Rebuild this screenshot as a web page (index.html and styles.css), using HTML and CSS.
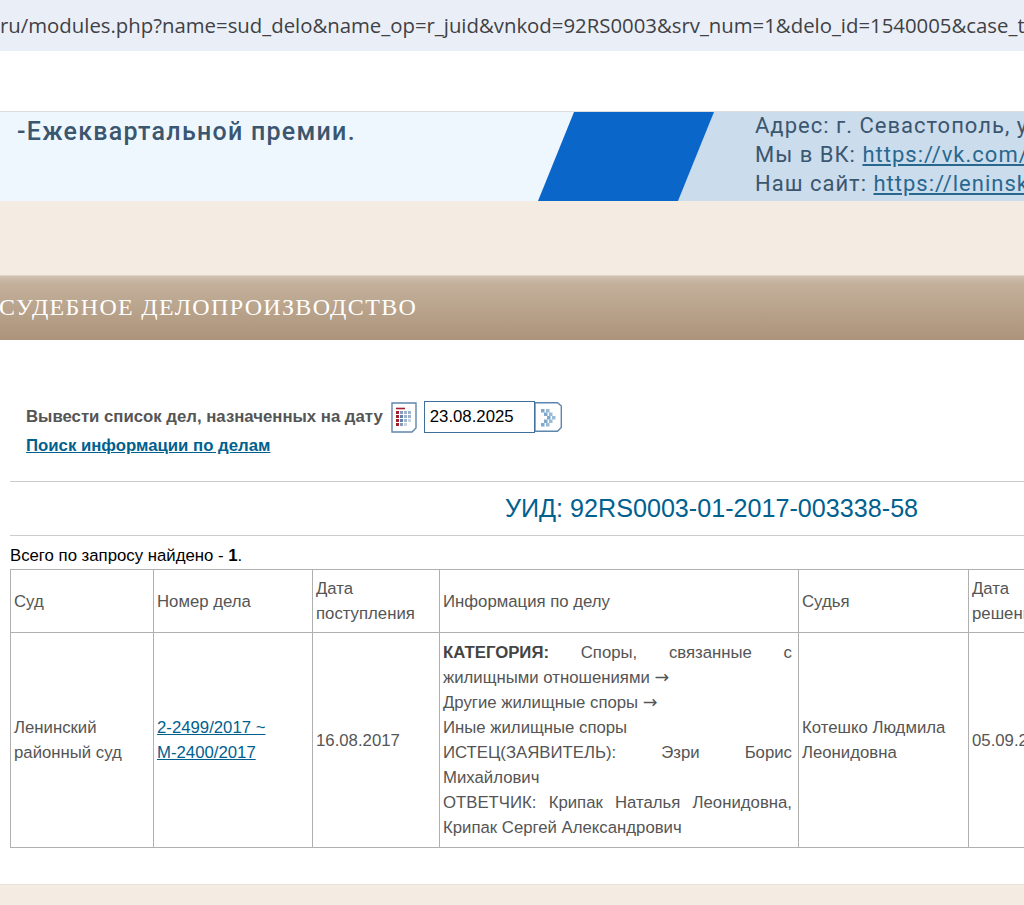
FILE: index.html
```html
<!DOCTYPE html>
<html lang="ru">
<head>
<meta charset="utf-8">
<title>Судебное делопроизводство</title>
<link rel="stylesheet" href="styles.css">
</head>
<body>
<div class="urlbar">ru/modules.php?name=sud_delo&amp;name_op=r_juid&amp;vnkod=92RS0003&amp;srv_num=1&amp;delo_id=1540005&amp;case_type=0</div>
<div class="topgap"></div>
<div class="banner">
  <svg class="banner-art" width="1024" height="89" viewBox="0 0 1024 89" aria-hidden="true">
    <polygon points="714,0 1024,0 1024,89 678,89" fill="#cbdcec"/>
    <polygon points="574,0 714,0 678,89 538,89" fill="#0a66c9"/>
  </svg>
  <div class="banner-left">-Ежеквартальной премии.</div>
  <div class="banner-right">
    <div>Адрес: г. Севастополь, ул. Ленина</div>
    <div>Мы в ВК: <a href="#">https://vk.com/leninsky</a></div>
    <div>Наш сайт: <a href="#">https://leninsky.sev.sudrf.ru</a></div>
  </div>
</div>
<div class="beige"></div>
<div class="titlebar"><span class="title">СУДЕБНОЕ ДЕЛОПРОИЗВОДСТВО</span></div>
<main class="content">
  <div class="datebar">
    <b class="datelabel">Вывести список дел, назначенных на дату</b>
    <svg class="calicon" width="26" height="31" viewBox="0 0 26 31" aria-hidden="true">
      <path d="M1 1H25V26L21 30H1Z" fill="#fff" stroke="#5f86ad" stroke-width="1.4"/>
      <path d="M5 6.5H14" stroke="#a31f2d" stroke-width="1.6"/>
      <rect x="5" y="9" width="3" height="3" fill="#a31f2d"/><rect x="9" y="9" width="3" height="3" fill="#8a9bb5"/><rect x="13" y="9" width="3" height="3" fill="#9db3cc"/><rect x="17" y="9" width="3" height="3" fill="#9db3cc"/>
      <rect x="5" y="13" width="3" height="3" fill="#a31f2d"/><rect x="9" y="13" width="3" height="3" fill="#5f7fa8"/><rect x="13" y="13" width="3" height="3" fill="#9db3cc"/><rect x="17" y="13" width="3" height="3" fill="#9db3cc"/>
      <rect x="5" y="17" width="3" height="3" fill="#a31f2d"/><rect x="9" y="17" width="3" height="3" fill="#5f7fa8"/><rect x="13" y="17" width="3" height="3" fill="#9db3cc"/><rect x="17" y="17" width="3" height="3" fill="#c5d3e2"/>
      <rect x="5" y="21" width="3" height="3" fill="#a31f2d"/><rect x="9" y="21" width="3" height="3" fill="#8a9bb5"/><rect x="13" y="21" width="3" height="3" fill="#c5d3e2"/>
    </svg>
    <div class="dategroup">
      <input class="dateinput" type="text" value="23.08.2025">
      <svg class="gobtn" width="27" height="30" viewBox="0 0 27 30" aria-hidden="true">
        <path d="M0 .7H22.500L26.300 4V25.500L22.500 29.300H0Z" fill="#fff" stroke="#5f86ad" stroke-width="1.4"/>
        <g fill="#7fa9cc">
          <rect x="6" y="7" width="3.500" height="3.500"/><rect x="9" y="10.500" width="3.500" height="3.500"/><rect x="12" y="14" width="3.500" height="3.500"/><rect x="9" y="17.500" width="3.500" height="3.500"/><rect x="6" y="21" width="3.500" height="3.500"/>
          <rect x="11" y="7" width="3.500" height="3.500" opacity=".8"/><rect x="14" y="10.500" width="3.500" height="3.500" opacity=".8"/><rect x="17" y="14" width="3.500" height="3.500" opacity=".8"/><rect x="14" y="17.500" width="3.500" height="3.500" opacity=".8"/><rect x="11" y="21" width="3.500" height="3.500" opacity=".8"/>
        </g>
      </svg>
    </div>
  </div>
  <a class="searchlink" href="#">Поиск информации по делам</a>
  <h2 class="uid">УИД: 92RS0003-01-2017-003338-58</h2>
  <p class="found">Всего по запросу найдено - <b>1</b>.</p>
  <table class="cases">
    <colgroup>
      <col class="c-court"><col class="c-num"><col class="c-date"><col class="c-info"><col class="c-judge"><col class="c-dec">
    </colgroup>
    <tr class="headrow">
      <td>Суд</td><td>Номер дела</td><td>Дата поступления</td><td>Информация по делу</td><td>Судья</td><td>Дата решения</td>
    </tr>
    <tr>
      <td>Ленинский районный суд</td>
      <td><a class="caselink" href="#">2-2499/2017 ~ М-2400/2017</a></td>
      <td>16.08.2017</td>
      <td class="info"><b>КАТЕГОРИЯ:</b> Споры, связанные с жилищными отношениями <span class="arrow">→</span><br>Другие жилищные споры <span class="arrow">→</span><br>Иные жилищные споры<br>ИСТЕЦ(ЗАЯВИТЕЛЬ): Эзри Борис Михайлович<br>ОТВЕТЧИК: Крипак Наталья Леонидовна, Крипак Сергей Александрович</td>
      <td>Котешко Людмила Леонидовна</td>
      <td class="nowrap">05.09.2017</td>
    </tr>
  </table>
</main>
<div class="footer"></div>
</body>
</html>
```
FILE: styles.css
```css
html, body { margin: 0; padding: 0; height: 905px; overflow: hidden; background: #fff; }
body { width: 1024px; font-family: "Liberation Sans", Arial, sans-serif; font-size: 16.75px; color: #555; }
.urlbar { height: 51px; box-sizing: border-box; padding-top: 12px; background: #eaeff7; color: #3f4145; font-family: "Open Sans", "Noto Sans", sans-serif; font-size: 20.35px; line-height: 27px; white-space: nowrap; overflow: hidden; }
.topgap { height: 60px; border-bottom: 1px solid #dcdcdc; }
.banner { position: relative; height: 89px; background: #eff7fe; overflow: hidden; color: #3b566f; font-family: Roboto, "Noto Sans", sans-serif; white-space: nowrap; }
.banner-art { position: absolute; left: 0; top: 0; }
.banner-left { position: absolute; left: 17px; top: 4px; font-size: 25px; font-weight: 500; line-height: 32px; letter-spacing: 1.27px; }
.banner-right { position: absolute; left: 755px; top: -1px; font-size: 22px; line-height: 29px; letter-spacing: 1px; }
.banner-right a { color: #28688f; }
.beige { height: 74px; background: #f4ebe3; }
.titlebar { height: 65px; box-sizing: border-box; padding-bottom: 2px; border-top: 1px solid #e0d3c6; background: linear-gradient(#d2c3b3 0, #c8b7a4 4px, #c3b09b 8px, #ac9379 100%); display: flex; align-items: center; overflow: hidden; white-space: nowrap; }
.title { margin-left: -1px; font-family: "Liberation Serif", "Times New Roman", serif; font-size: 24px; letter-spacing: 1.33px; color: #fff; }
.content { height: 544px; box-sizing: border-box; padding: 61px 0 0 10px; overflow: hidden; }
.datebar { display: flex; align-items: center; height: 32px; padding-left: 16px; }
.datelabel { font-size: 16.75px; color: #555; }
.calicon { margin-left: 8px; display: block; }
.dategroup { display: flex; align-items: flex-start; margin-left: 7px; }
.dateinput { width: 111px; height: 32px; box-sizing: border-box; padding: 0 5px; border: 1px solid #3f6f9c; border-radius: 0; font: 16.75px "Liberation Sans", Arial, sans-serif; color: #000; background: #fff; }
.gobtn { display: block; margin-top: 1px; }
.searchlink { display: block; margin: 2px 0 0 16px; font-size: 16.75px; font-weight: bold; line-height: 22px; color: #00618f; width: max-content; }
.uid { margin: 24px 0 0; border-top: 1px solid #ccc; border-bottom: 1px solid #ccc; height: 55px; box-sizing: border-box; padding: 11px 0 0 495px; font-size: 25.15px; line-height: 30px; font-weight: normal; color: #00618f; white-space: nowrap; }
.found { margin: 10px 0 0; font-size: 16.75px; line-height: 19px; color: #000; }
.cases { margin-top: 4px; border-collapse: collapse; table-layout: fixed; width: 1058px; }
.cases td { border: 1px solid #b0b0b0; padding: 7px 6px 7px 3px; line-height: 25px; font-size: 16.75px; color: #555; vertical-align: middle; }
.cases .headrow td { padding-top: 6px; padding-bottom: 6px; }
.c-court { width: 143px; } .c-num { width: 159px; } .c-date { width: 127px; } .c-info { width: 359px; } .c-judge { width: 170px; } .c-dec { width: 100px; }
.caselink { color: #00618f; }
.info { text-align: justify; }
.info b { color: #444; }
.arrow { font-family: "DejaVu Sans", sans-serif; font-size: 17.5px; line-height: 20px; }
.nowrap { white-space: nowrap; }
.footer { height: 21px; box-sizing: border-box; border-top: 1px solid #e9e2da; background: #f4ebe3; }
```
